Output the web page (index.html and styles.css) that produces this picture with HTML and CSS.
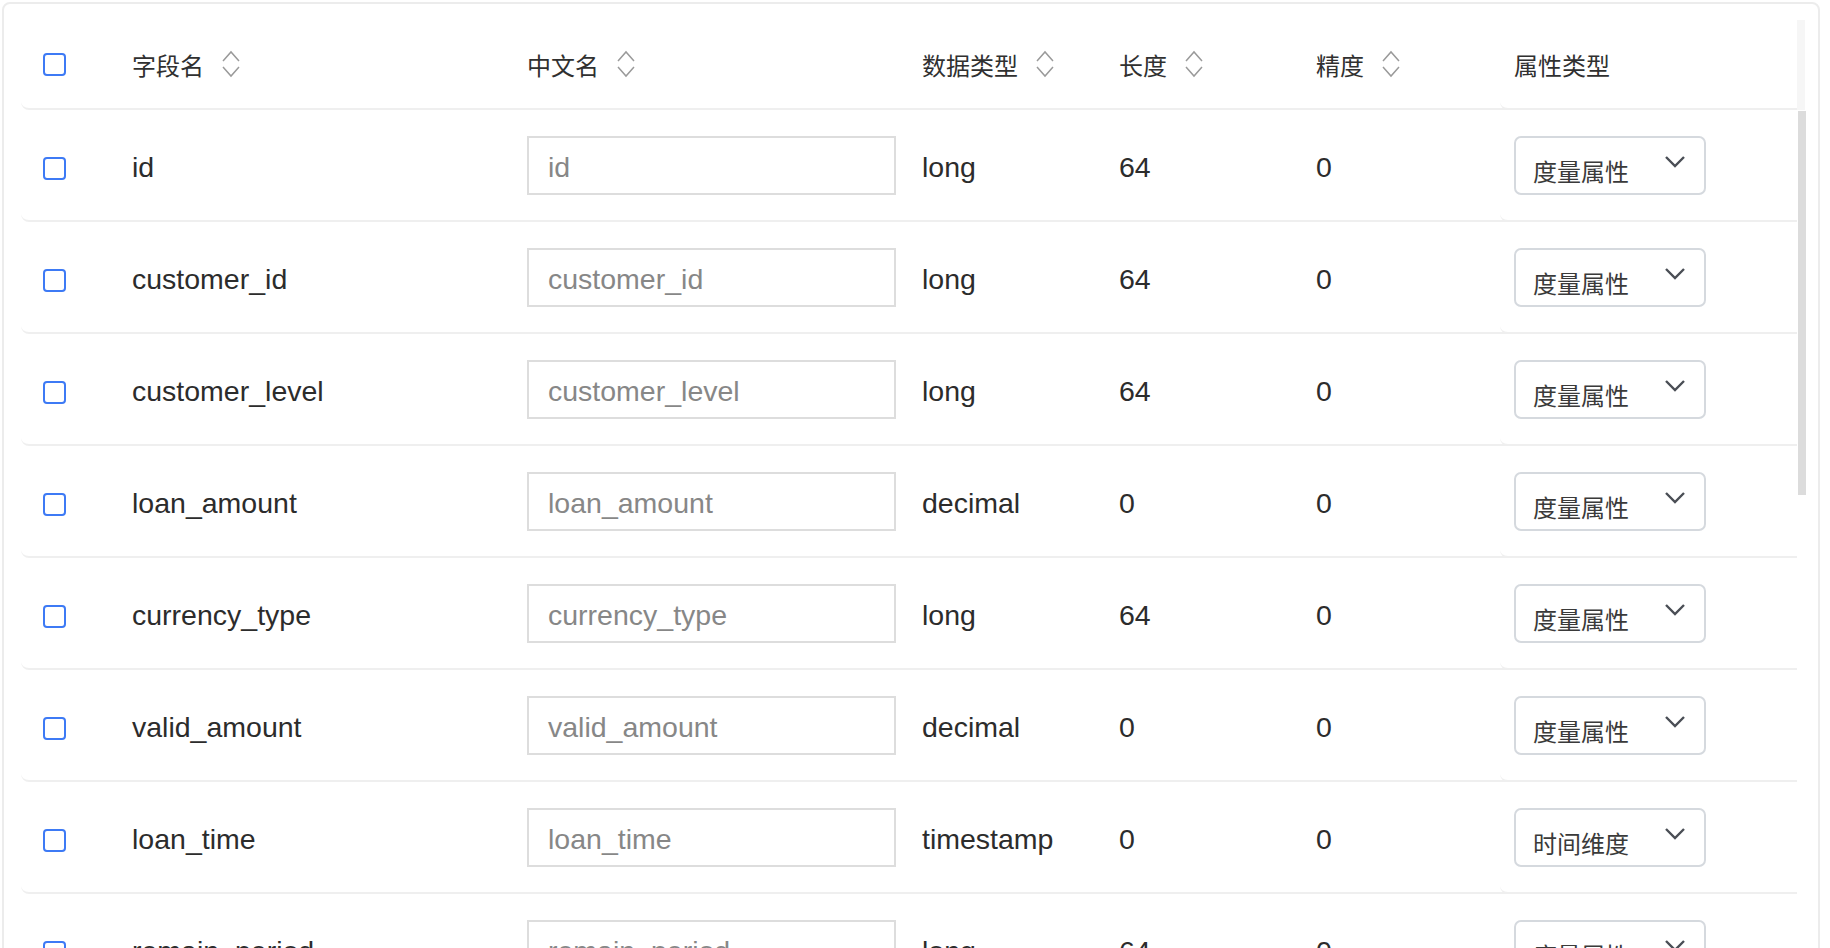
FILE: index.html
```html
<!DOCTYPE html>
<html lang="zh-CN">
<head>
<meta charset="utf-8">
<title>字段列表</title>
<link rel="stylesheet" href="styles.css">
</head>
<body>
<div class="card">
  <div class="table">
    <div class="row head">
      <div class="cell c-check"><span class="checkbox"></span></div>
      <div class="cell c-name"><span class="th">字段名</span><svg class="sort" viewBox="0 0 22 30"><polyline points="3,12 11,3 19,12"/><polyline points="3,18 11,27 19,18"/></svg></div>
      <div class="cell c-cn"><span class="th">中文名</span><svg class="sort" viewBox="0 0 22 30"><polyline points="3,12 11,3 19,12"/><polyline points="3,18 11,27 19,18"/></svg></div>
      <div class="cell c-type"><span class="th">数据类型</span><svg class="sort" viewBox="0 0 22 30"><polyline points="3,12 11,3 19,12"/><polyline points="3,18 11,27 19,18"/></svg></div>
      <div class="cell c-len"><span class="th">长度</span><svg class="sort" viewBox="0 0 22 30"><polyline points="3,12 11,3 19,12"/><polyline points="3,18 11,27 19,18"/></svg></div>
      <div class="cell c-prec"><span class="th">精度</span><svg class="sort" viewBox="0 0 22 30"><polyline points="3,12 11,3 19,12"/><polyline points="3,18 11,27 19,18"/></svg></div>
      <div class="cell c-attr"><span class="th">属性类型</span></div>
    </div>

    <div class="row">
      <div class="cell c-check"><span class="checkbox"></span></div>
      <div class="cell c-name"><span class="td">id</span></div>
      <div class="cell c-cn"><div class="input"><span class="ph">id</span></div></div>
      <div class="cell c-type"><span class="td">long</span></div>
      <div class="cell c-len"><span class="td">64</span></div>
      <div class="cell c-prec"><span class="td">0</span></div>
      <div class="cell c-attr"><div class="select"><span class="sel-text">度量属性</span><svg class="chev" viewBox="0 0 22 13"><polyline points="2,2 11,11 20,2"/></svg></div></div>
    </div>

    <div class="row">
      <div class="cell c-check"><span class="checkbox"></span></div>
      <div class="cell c-name"><span class="td">customer_id</span></div>
      <div class="cell c-cn"><div class="input"><span class="ph">customer_id</span></div></div>
      <div class="cell c-type"><span class="td">long</span></div>
      <div class="cell c-len"><span class="td">64</span></div>
      <div class="cell c-prec"><span class="td">0</span></div>
      <div class="cell c-attr"><div class="select"><span class="sel-text">度量属性</span><svg class="chev" viewBox="0 0 22 13"><polyline points="2,2 11,11 20,2"/></svg></div></div>
    </div>

    <div class="row">
      <div class="cell c-check"><span class="checkbox"></span></div>
      <div class="cell c-name"><span class="td">customer_level</span></div>
      <div class="cell c-cn"><div class="input"><span class="ph">customer_level</span></div></div>
      <div class="cell c-type"><span class="td">long</span></div>
      <div class="cell c-len"><span class="td">64</span></div>
      <div class="cell c-prec"><span class="td">0</span></div>
      <div class="cell c-attr"><div class="select"><span class="sel-text">度量属性</span><svg class="chev" viewBox="0 0 22 13"><polyline points="2,2 11,11 20,2"/></svg></div></div>
    </div>

    <div class="row">
      <div class="cell c-check"><span class="checkbox"></span></div>
      <div class="cell c-name"><span class="td">loan_amount</span></div>
      <div class="cell c-cn"><div class="input"><span class="ph">loan_amount</span></div></div>
      <div class="cell c-type"><span class="td">decimal</span></div>
      <div class="cell c-len"><span class="td">0</span></div>
      <div class="cell c-prec"><span class="td">0</span></div>
      <div class="cell c-attr"><div class="select"><span class="sel-text">度量属性</span><svg class="chev" viewBox="0 0 22 13"><polyline points="2,2 11,11 20,2"/></svg></div></div>
    </div>

    <div class="row">
      <div class="cell c-check"><span class="checkbox"></span></div>
      <div class="cell c-name"><span class="td">currency_type</span></div>
      <div class="cell c-cn"><div class="input"><span class="ph">currency_type</span></div></div>
      <div class="cell c-type"><span class="td">long</span></div>
      <div class="cell c-len"><span class="td">64</span></div>
      <div class="cell c-prec"><span class="td">0</span></div>
      <div class="cell c-attr"><div class="select"><span class="sel-text">度量属性</span><svg class="chev" viewBox="0 0 22 13"><polyline points="2,2 11,11 20,2"/></svg></div></div>
    </div>

    <div class="row">
      <div class="cell c-check"><span class="checkbox"></span></div>
      <div class="cell c-name"><span class="td">valid_amount</span></div>
      <div class="cell c-cn"><div class="input"><span class="ph">valid_amount</span></div></div>
      <div class="cell c-type"><span class="td">decimal</span></div>
      <div class="cell c-len"><span class="td">0</span></div>
      <div class="cell c-prec"><span class="td">0</span></div>
      <div class="cell c-attr"><div class="select"><span class="sel-text">度量属性</span><svg class="chev" viewBox="0 0 22 13"><polyline points="2,2 11,11 20,2"/></svg></div></div>
    </div>

    <div class="row">
      <div class="cell c-check"><span class="checkbox"></span></div>
      <div class="cell c-name"><span class="td">loan_time</span></div>
      <div class="cell c-cn"><div class="input"><span class="ph">loan_time</span></div></div>
      <div class="cell c-type"><span class="td">timestamp</span></div>
      <div class="cell c-len"><span class="td">0</span></div>
      <div class="cell c-prec"><span class="td">0</span></div>
      <div class="cell c-attr"><div class="select"><span class="sel-text">时间维度</span><svg class="chev" viewBox="0 0 22 13"><polyline points="2,2 11,11 20,2"/></svg></div></div>
    </div>

    <div class="row">
      <div class="cell c-check"><span class="checkbox"></span></div>
      <div class="cell c-name"><span class="td">remain_period</span></div>
      <div class="cell c-cn"><div class="input"><span class="ph">remain_period</span></div></div>
      <div class="cell c-type"><span class="td">long</span></div>
      <div class="cell c-len"><span class="td">64</span></div>
      <div class="cell c-prec"><span class="td">0</span></div>
      <div class="cell c-attr"><div class="select"><span class="sel-text">度量属性</span><svg class="chev" viewBox="0 0 22 13"><polyline points="2,2 11,11 20,2"/></svg></div></div>
    </div>
  </div>
  <div class="scroll-track"></div>
  <div class="scroll-thumb"></div>
</div>
</body>
</html>
```

FILE: styles.css
```css
* { box-sizing: border-box; }
html, body {
  margin: 0;
  padding: 0;
  background: #ffffff;
  overflow: hidden;
  height: 948px;
}
body {
  font-family: "Liberation Sans", "Noto Sans CJK SC", sans-serif;
  color: #2f2f2f;
}
.card {
  position: relative;
  margin: 2px 0 0 2px;
  width: 1818px;
  height: 1200px;
  border: 2px solid #ececec;
  border-radius: 8px;
  padding: 16px 0 0 17px;
}
.table {
  width: 1776px;
  display: flex;
  flex-direction: column;
}
.row {
  display: flex;
  height: 112px;
  border-bottom: 2px solid #efefef;
  border-bottom-left-radius: 8px;
}
.row.head {
  height: 90px;
}
.cell {
  display: flex;
  align-items: center;
  padding-left: 22px;
  height: 100%;
}
.c-check { width: 89px; }
.c-name { width: 395px; }
.c-cn { width: 395px; }
.c-type { width: 197px; }
.c-len { width: 197px; }
.c-prec { width: 206px; }
.c-attr {
  width: 297px;
  padding-left: 14px;
  margin-bottom: -2px;
  height: calc(100% + 2px);
  border-bottom: 2px solid #efefef;
  border-bottom-left-radius: 8px;
}
.checkbox {
  display: block;
  width: 23px;
  height: 23px;
  border: 2px solid #3d7af5;
  border-radius: 4px;
  background: #fff;
  margin-top: 6px;
}
.head .checkbox { margin-top: 0; }
.th {
  font-family: "Noto Sans CJK SC", sans-serif;
  font-size: 24px;
  color: #303030;
  line-height: 1;
  margin-top: 2px;
}
.sort {
  width: 22px;
  height: 30px;
  margin-left: 16px;
  fill: none;
  stroke: #9a9a9a;
  stroke-width: 1.5;
  margin-top: 0;
}
.td {
  font-size: 28.5px;
  line-height: 1;
  padding-top: 5px;
  color: #2c2c2c;
}
.input {
  width: 369px;
  height: 59px;
  border: 2px solid #dddddd;
  display: flex;
  align-items: center;
  padding-left: 19px;
}
.ph {
  font-size: 28.5px;
  line-height: 1;
  padding-top: 5px;
  color: #878787;
}
.select {
  width: 192px;
  height: 59px;
  border: 2px solid #d5d9de;
  border-radius: 7px;
  display: flex;
  align-items: center;
  justify-content: space-between;
  padding: 0 18px 0 17px;
}
.sel-text {
  font-family: "Noto Sans CJK SC", sans-serif;
  font-size: 24px;
  line-height: 1;
  color: #3a3a3a;
  margin-top: 12px;
}
.chev {
  width: 22px;
  height: 13px;
  fill: none;
  stroke: #4a4e55;
  stroke-width: 2.4;
  margin-top: -8px;
}
.scroll-track {
  position: absolute;
  left: 1793px;
  top: 16px;
  width: 8px;
  height: 90px;
  background: #f6f6f6;
}
.scroll-thumb {
  position: absolute;
  left: 1794px;
  top: 107px;
  width: 8px;
  height: 384px;
  background: #dcdcdc;
}
```
